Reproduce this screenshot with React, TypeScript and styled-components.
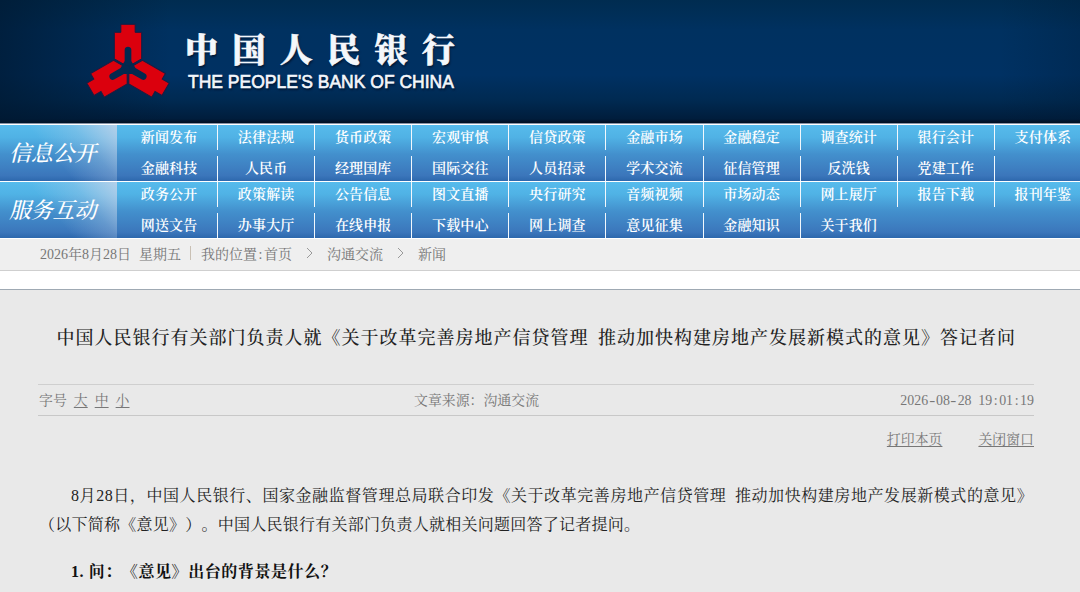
import React from 'react';
import styled, { createGlobalStyle } from 'styled-components';

const GlobalStyle = createGlobalStyle`
  * { box-sizing: border-box; }
  body {
    margin: 0;
    overflow: hidden;
    background: #e9e9e9;
    font-family: "Liberation Serif", "Noto Serif CJK SC", "Noto Sans CJK SC", serif;
    text-spacing-trim: space-all;
    font-kerning: none;
  }
`;

const Page = styled.div`
  width: 1080px;
  height: 592px;
  overflow: hidden;
`;

const Header = styled.header`
  height: 124px;
  display: flex;
  align-items: flex-start;
  padding: 23px 0 0 86px;
  border-bottom: 1px solid #8793a5;
  background:
    linear-gradient(90deg, rgba(0, 24, 48, 0.7) 0, rgba(0, 24, 48, 0) 170px, rgba(0, 24, 48, 0) 1000px, rgba(0, 24, 48, 0.25) 1080px),
    linear-gradient(180deg, #002c50 0, #003160 30px, #003163 75px, #002a52 100px, #001d3c 119px, #000e20 123px);
`;

const Brand = styled.div`
  display: flex;
  flex-direction: column;
  margin: 8px 0 0 15px;
  color: #f4f7fb;
  text-shadow: 1px 2px 2px rgba(0, 10, 30, 0.7);
`;

const BrandName = styled.div`
  height: 41px;
  line-height: 40px;
  font-size: 33px;
  font-weight: 900;
  -webkit-text-stroke: 0.6px #f4f7fb;
  letter-spacing: 14.4px;
  white-space: nowrap;
`;

const BrandLatin = styled.div`
  height: 20px;
  margin-left: 3px;
  line-height: 20px;
  font-family: "Liberation Sans", sans-serif;
  font-size: 17.5px;
  -webkit-text-stroke: 0.6px #f4f7fb;
  white-space: nowrap;
`;

const NavRow = styled.nav<{ $height: number }>`
  display: flex;
  height: ${(p) => p.$height}px;
  border-top: 1px solid #fff;
  background: linear-gradient(180deg, #56bbec 0, #50b2e5 22%, #4390cd 52%, #3b76bb 90%, #2d68ad 100%);
`;

const NavLabel = styled.div`
  width: 117px;
  flex: none;
  display: flex;
  align-items: center;
  padding: 0 0 3px 9px;
  font-size: 22px;
  font-weight: 500;
  font-style: italic;
  letter-spacing: -0.2px;
  color: #fff;
  background: linear-gradient(50deg, rgba(190, 208, 232, 0) 45%, rgba(190, 208, 232, 0.3) 72%, rgba(196, 212, 234, 0.85) 100%);
`;

const NavGrid = styled.div`
  flex: none;
  display: grid;
  grid-template-columns: repeat(10, 97.1px);
  grid-template-rows: 25px 25px;
  row-gap: 6px;
  margin-left: 4px;
`;

const NavItem = styled.a<{ $divider: boolean }>`
  border-right: 1.5px solid ${(p) => (p.$divider ? '#f2f8fd' : 'transparent')};
  text-align: center;
  font-size: 14px;
  font-weight: 600;
  line-height: 25px;
  letter-spacing: 0.15px;
  white-space: nowrap;
  color: #fff;
`;

const Crumbs = styled.div`
  display: flex;
  align-items: center;
  height: 33px;
  padding: 0 0 3px 40px;
  border-top: 1px solid #fff;
  border-bottom: 1px solid #cfcfcf;
  background: #efefef;
  font-size: 14px;
  color: #777;
  white-space: nowrap;
`;

const Weekday = styled.span`
  margin-left: 8px;
`;

const Bar = styled.span`
  width: 1px;
  height: 14px;
  margin: 0 10px 0 9px;
  background: #c9c0b4;
`;

const Pad = styled.span`
  padding: 0 1.6px;
`;

const Hyphen = styled.span`
  display: inline-block;
  transform: scaleX(1.3);
`;

const Chevron = styled.svg`
  flex: none;
  width: 7px;
  height: 12px;
  margin: 0 14px;
`;

const Gap = styled.div`
  height: 19px;
  background: #fff;
  border-bottom: 1px solid #9fa9b3;
`;

const Article = styled.main`
  padding: 0 46px 0 38px;
  background: #e9e9e9;
`;

const Title = styled.h1`
  margin: 0 -30px 0 18.5px;
  height: 94px;
  line-height: 96px;
  font-size: 18px;
  font-weight: 500;
  letter-spacing: 1px;
  word-spacing: 4px;
  white-space: nowrap;
  color: #222;
`;

const Meta = styled.div`
  display: grid;
  grid-template-columns: 376px 1fr auto;
  align-items: center;
  height: 32px;
  padding-bottom: 3px;
  border-top: 1px solid #cfcfcf;
  border-bottom: 1px solid #c8c8c8;
  font-size: 13.9px;
  color: #777;
`;

const Sizes = styled.div`
  display: flex;
  gap: 7px;
  padding-left: 1px;
`;

const Time = styled.time`
  padding-top: 5px;
`;

const Link = styled.a`
  text-decoration: underline;
  text-underline-offset: 2px;
`;

const Actions = styled.div`
  display: flex;
  justify-content: flex-end;
  gap: 36px;
  height: 65px;
  padding-top: 13px;
  font-size: 13.9px;
  line-height: 22px;
  color: #777;
`;

const Paragraph = styled.p`
  margin: 0 -30px 18px 0;
  font-size: 16px;
  line-height: 29px;
  letter-spacing: 0.57px;
  word-spacing: 4px;
  white-space: nowrap;
  color: #222;
`;

const Line = styled.span<{ $indent?: boolean }>`
  display: block;
  padding-left: ${(p) => (p.$indent ? 33 : 1)}px;
  letter-spacing: ${(p) => (p.$indent ? 'inherit' : '0.25px')};
`;

const Question = styled(Paragraph)`
  font-weight: 700;
  word-spacing: 0;
  color: #111;
`;

const info = [
  ['新闻发布', '法律法规', '货币政策', '宏观审慎', '信贷政策', '金融市场', '金融稳定', '调查统计', '银行会计', '支付体系'],
  ['金融科技', '人民币', '经理国库', '国际交往', '人员招录', '学术交流', '征信管理', '反洗钱', '党建工作', ''],
];
const service = [
  ['政务公开', '政策解读', '公告信息', '图文直播', '央行研究', '音频视频', '市场动态', '网上展厅', '报告下载', '报刊年鉴'],
  ['网送文告', '办事大厅', '在线申报', '下载中心', '网上调查', '意见征集', '金融知识', '关于我们'],
];

function Nav({ label, rows, height }: { label: string; rows: string[][]; height: number }) {
  return (
    <NavRow $height={height}>
      <NavLabel>{label}</NavLabel>
      <NavGrid>
        {rows.map((row, r) =>
          row.map((item, i) => (
            <NavItem key={`${r}-${i}`} $divider={i < row.length - 1}>
              {item}
            </NavItem>
          )),
        )}
      </NavGrid>
    </NavRow>
  );
}

const EmblemSvg = styled.svg`
  flex: none;
  width: 84px;
  height: 78px;
`;

function Emblem() {
  return (
    <EmblemSvg viewBox="0 0 252 234">
      <g transform="translate(126 134)">
        {[0, 120, 240].map((a) => (
          <path
            key={a}
            transform={`rotate(${a})`}
            d="M-21.5-130H21.5V-106H41V-26.5L0-3L-41-26.5V-106H-21.5Z"
            fill="#db000d"
            stroke="#1c1c42"
            strokeWidth="3"
          />
        ))}
        {[0, 120, 240].map((a) => (
          <path
            key={a}
            transform={`rotate(${a})`}
            d="M-10-54C-10-66 10-66 10-54V-20L17-8L0 6L-17-8L-10-20Z"
            fill="#03294f"
          />
        ))}
      </g>
    </EmblemSvg>
  );
}

const Arrow = () => (
  <Chevron viewBox="0 0 7 12">
    <path d="M1 1L6 6L1 11" fill="none" stroke="#999" strokeWidth="1" />
  </Chevron>
);

export default function App() {
  return (
    <Page>
      <GlobalStyle />
      <Header>
        <Emblem />
        <Brand>
          <BrandName>中国人民银行</BrandName>
          <BrandLatin>THE PEOPLE'S BANK OF CHINA</BrandLatin>
        </Brand>
      </Header>
      <Nav label="信息公开" rows={info} height={57} />
      <Nav label="服务互动" rows={service} height={57} />
      <Crumbs>
        <span>2026年8月28日</span>
        <Weekday>星期五</Weekday>
        <Bar />
        <span>我的位置<Pad>:</Pad>首页</span>
        <Arrow />
        <span>沟通交流</span>
        <Arrow />
        <span>新闻</span>
      </Crumbs>
      <Gap />
      <Article>
        <Title>中国人民银行有关部门负责人就《关于改革完善房地产信贷管理 推动加快构建房地产发展新模式的意见》答记者问</Title>
        <Meta>
          <Sizes>
            <span>字号</span>
            <Link>大</Link>
            <Link>中</Link>
            <Link>小</Link>
          </Sizes>
          <span>文章来源：沟通交流</span>
          <Time>
            2026<Pad><Hyphen>-</Hyphen></Pad>08<Pad><Hyphen>-</Hyphen></Pad>28<Pad> </Pad>19<Pad>:</Pad>01<Pad>:</Pad>19
          </Time>
        </Meta>
        <Actions>
          <Link>打印本页</Link>
          <Link>关闭窗口</Link>
        </Actions>
        <Paragraph>
          <Line $indent>8月28日，中国人民银行、国家金融监督管理总局联合印发《关于改革完善房地产信贷管理 推动加快构建房地产发展新模式的意见》</Line>
          <Line>（以下简称《意见》）。中国人民银行有关部门负责人就相关问题回答了记者提问。</Line>
        </Paragraph>
        <Question>
          <Line $indent>1. 问：《意见》出台的背景是什么？</Line>
        </Question>
      </Article>
    </Page>
  );
}
